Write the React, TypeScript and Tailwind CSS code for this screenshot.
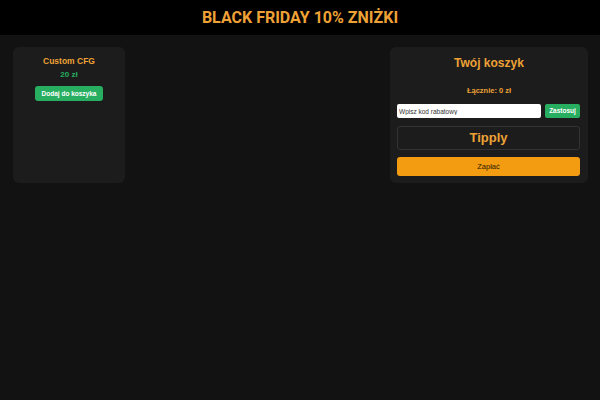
import { useState } from "react";

type Product = { id: number; name: string; price: number };

const products: Product[] = [{ id: 1, name: "Custom CFG", price: 20 }];

export default function App() {
  const [cart, setCart] = useState<Product[]>([]);
  const [code, setCode] = useState("");
  const total = cart.reduce((sum, item) => sum + item.price, 0);

  return (
    <div className="min-h-[400px] bg-[#121212] font-['Liberation_Sans',Arial,sans-serif]">
      <header className="flex h-[35px] items-center justify-center bg-black pt-[1px]">
        <h1 className="font-['Roboto',sans-serif] text-[16px] font-bold leading-none text-[#eea236]">
          BLACK FRIDAY 10% ZNIŻKI
        </h1>
      </header>

      <main className="flex justify-between pl-[13px] pr-[12px] pt-[12px]">
        <div className="flex">
          {products.map((p) => (
            <div
              key={p.id}
              className="flex w-[112px] flex-col items-center rounded-[6px] bg-[#1c1c1c] pt-[9px]"
            >
              <h3 className="text-[8.5px] font-bold leading-[10px] text-[#eea236]">{p.name}</h3>
              <p className="mt-[4px] text-[8px] font-bold leading-[10px] text-[#27ae60]">
                {p.price} zł
              </p>
              <button
                onClick={() => setCart([...cart, p])}
                className="mt-[6px] h-[15px] rounded-[3px] bg-[#27ae60] px-[7px] text-[6.5px] font-bold text-white"
              >
                Dodaj do koszyka
              </button>
            </div>
          ))}
        </div>

        <aside className="flex h-[136px] w-[198px] flex-col rounded-[6px] bg-[#1c1c1c] px-[7px] pt-[8px]">
          <h2 className="text-center text-[12px] font-bold leading-[16px] text-[#eea236]">
            Twój koszyk
          </h2>
          <p className="mt-[15px] text-center text-[7.5px] font-bold leading-[10px] text-[#eea236]">
            Łącznie: {total} zł
          </p>
          <div className="mt-[8px] flex h-[14px] gap-[4px] pr-[1px]">
            <input
              value={code}
              onChange={(e) => setCode(e.target.value)}
              placeholder="Wpisz kod rabatowy"
              className="h-full w-[144px] rounded-[2px] bg-white px-[2px] text-[6.5px] text-black placeholder:text-[#333]"
            />
            <button className="h-full flex-1 rounded-[2px] bg-[#27ae60] text-[6.5px] font-bold text-white">
              Zastosuj
            </button>
          </div>
          <div className="mr-[1px] mt-[8px] flex h-[24px] items-center justify-center rounded-[3px] border border-[#333] text-[13px] font-bold text-[#eea236]">
            Tipply
          </div>
          <button className="mr-[1px] mt-[7px] h-[19px] rounded-[3px] bg-[#f39c12] text-[7.5px] text-[#2a1a00]">
            Zapłać
          </button>
        </aside>
      </main>
    </div>
  );
}
